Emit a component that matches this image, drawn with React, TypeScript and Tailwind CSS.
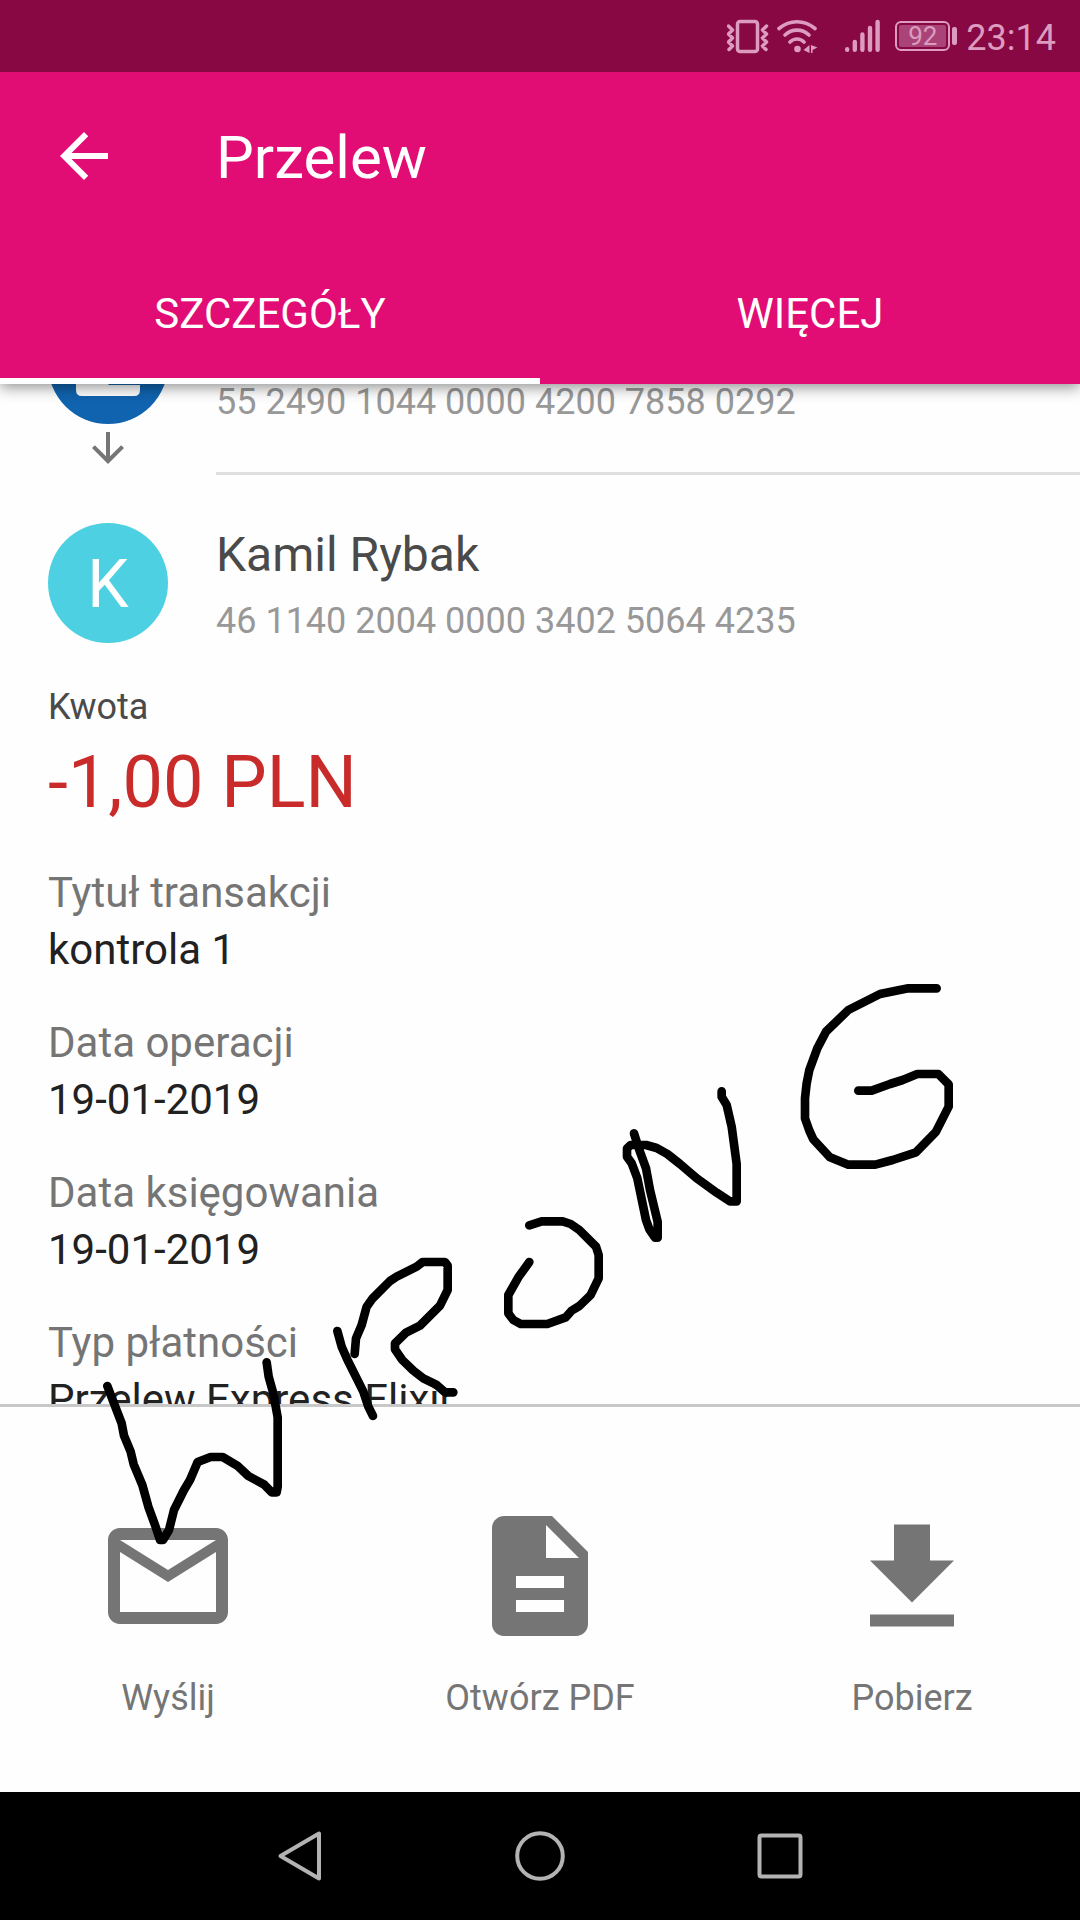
import React from "react";

const details = [
  { label: "Tytuł transakcji", value: "kontrola 1" },
  { label: "Data operacji", value: "19-01-2019" },
  { label: "Data księgowania", value: "19-01-2019" },
  { label: "Typ płatności", value: "Przelew Express Elixir" },
];

const actions = [
  {
    label: "Wyślij",
    path: "M20 4H4c-1.1 0-2 .9-2 2v12c0 1.1.9 2 2 2h16c1.1 0 2-.9 2-2V6c0-1.1-.9-2-2-2zm0 14H4V8l8 5 8-5v10zm-8-7L4 6h16l-8 5z",
  },
  {
    label: "Otwórz PDF",
    path: "M14 2H6c-1.1 0-2 .9-2 2v16c0 1.1.9 2 2 2h12c1.1 0 2-.9 2-2V8l-6-6zm2 16H8v-2h8v2zm0-4H8v-2h8v2zm-3-5V3.5L18.5 9H13z",
  },
  {
    label: "Pobierz",
    path: "M19 9.4h-4v-6H9v6H5l7 7 7-7zM5 18.4v2h14v-2H5z",
  },
];

function StatusBar() {
  return (
    <div className="z-10 flex h-[72px] shrink-0 items-center justify-end bg-[#870842] pr-6 text-[#dc9bbf]">
      <svg className="h-9 w-[42px]" viewBox="0 0 42 36" fill="none" stroke="currentColor" aria-hidden="true">
        <rect x="10.500" y="3.500" width="20" height="30" rx="2.500" strokeWidth="3.500" />
        <path d="M1.500 8l4 4-4 4 4 4-4 4 4 4-3.500 3.500M39.500 8l-4 4 4 4-4 4 4 4-4 4 3.500 3.500" strokeWidth="3.500" strokeLinejoin="round" strokeLinecap="round" />
      </svg>
      <svg className="ml-2 h-9 w-[42px]" viewBox="0 0 42 36" fill="none" stroke="currentColor" strokeWidth="3.600" strokeLinecap="round" aria-hidden="true">
        <path d="M2 10.500C13 1.500 27 1.500 38 10.500M8 17c7-6.500 17-6.500 24 0M13 24c4-4 10-4 14 0" />
        <circle cx="20.500" cy="31" r="3.300" fill="currentColor" stroke="none" />
        <path d="M32.500 27v8l-6-3zM34 27v8h1.500v-3l5-2.500z" fill="currentColor" stroke="none" />
      </svg>
      <svg className="ml-[26px] h-9 w-9" viewBox="0 0 36 36" fill="none" stroke="currentColor" strokeWidth="4.400" strokeLinecap="round" aria-hidden="true">
        <path d="M2.200 31.300v.500M9.800 24v7.800M17.400 16.500v15.300M25 10v21.800M32.600 4v27.800" />
      </svg>
      <div className="ml-[14px] flex items-center gap-[2px]">
        <div className="flex h-[30px] w-[55px] items-center justify-center rounded-md border-2 border-current p-[2px]">
          <span className="flex h-full w-full items-center justify-center rounded-xs bg-[#a94378] text-[26px] leading-none">92</span>
        </div>
        <span className="h-[18px] w-[5px] rounded-xs bg-current" />
      </div>
      <span className="ml-[9px] pt-[3px] text-4xl">23:14</span>
    </div>
  );
}

function Header() {
  return (
    <header className="shrink-0 bg-[#e20d74] text-white shadow-[0_3px_14px_rgba(0,0,0,0.45)]">
      <div className="flex h-[168px] items-center gap-24 px-12">
        <button type="button" aria-label="Wstecz">
          <svg className="size-[72px]" viewBox="0 0 24 24" fill="currentColor">
            <path d="M20 11H7.830l5.590-5.590L12 4l-8 8 8 8 1.410-1.410L7.830 13H20v-2z" />
          </svg>
        </button>
        <h1 className="pt-1 text-6xl">Przelew</h1>
      </div>
      <div className="grid h-36 grid-cols-2 text-[42px]" role="tablist">
        <button type="button" role="tab" aria-selected="true" className="border-b-6 border-white pt-2">
          SZCZEGÓŁY
        </button>
        <button type="button" role="tab" aria-selected="false" className="border-b-6 border-transparent pt-2">
          WIĘCEJ
        </button>
      </div>
    </header>
  );
}

function Parties() {
  return (
    <>
      <div className="-mt-20 flex">
        <div className="flex w-[216px] shrink-0 flex-col pb-[3px] pl-12">
          <svg className="size-[120px]" viewBox="0 0 120 120" aria-hidden="true">
            <circle cx="60" cy="60" r="60" fill="#1063ae" />
            <path d="M28 40h64v46q0 6-6 6H34q-6 0-6-6z" fill="#fff" />
            <path d="M57 77h35v4H61z" fill="#1063ae" />
          </svg>
          <svg className="ml-9 size-12 text-[#757575]" viewBox="0 0 24 24" fill="currentColor" aria-hidden="true">
            <path d="M20 12l-1.410-1.410L13 16.170V4h-2v12.170l-5.580-5.590L4 12l8 8 8-8z" />
          </svg>
        </div>
        <div className="flex-1 border-b-3 border-[#dfdfdf] pt-20 text-4xl leading-[36px] text-[#989898]">
          55 2490 1044 0000 4200 7858 0292
        </div>
      </div>
      <div className="mt-12 flex gap-12 pl-12">
        <div className="flex size-[120px] shrink-0 items-center justify-center rounded-full bg-[#4dd0e1] pt-1 text-[66px] leading-none text-white">
          K
        </div>
        <div className="pt-1">
          <h2 className="text-5xl leading-[56px] text-[#4a4a4a]">Kamil Rybak</h2>
          <p className="mt-4 text-4xl leading-[44px] text-[#989898]">46 1140 2004 0000 3402 5064 4235</p>
        </div>
      </div>
    </>
  );
}

function Annotation() {
  return (
    <svg
      className="pointer-events-none absolute inset-0 z-20 h-full w-full"
      viewBox="0 0 1080 1920"
      fill="none"
      stroke="#000"
      strokeWidth="26"
      strokeLinecap="round"
      strokeLinejoin="round"
      role="img"
      aria-label="WRONG"
    >
      <g transform="translate(0 1130) scale(.33333)">
        <path d="M322 768L365 880L372 917L392 965L401 1003L427 1065L445 1130L465 1185L480 1230H489L507 1200L522 1140L552 1080L570 1050L593 996L632 981H668L712 1007L745 1038L793 1064L815 1087H830L833 1070V862L820 790L806 740L800 697" />
        <path d="M1012 603L1025 650L1045 695L1090 785L1105 830L1119 858" />
        <path d="M1064 672L1068 625L1085 585L1100 530L1118 505L1170 453L1190 440L1250 410L1268 396H1335L1343 407V480L1320 527L1260 587L1218 608L1185 640V658L1207 690L1240 722L1270 745L1310 765L1335 787H1360" />
      </g>
      <g transform="translate(300 1180) scale(.33333)">
        <path d="M688 136L725 124H788L812 132L838 150L888 200L896 225V295L872 345L838 378L815 392L797 412L742 432H662L640 420L625 400V345L655 292L688 246" />
      </g>
      <g transform="translate(580 960) scale(.33333)">
        <path d="M162 520L178 570L198 625L210 690L233 785V833H225L208 808L198 780L172 655L155 610L141 590V565L152 555H198L230 564L262 582L300 612L350 655L410 698L450 724H470V612L455 500L440 435L425 410V394" />
        <path d="M835 392H875L930 372L968 360L1012 342H1075L1106 373V440L1068 515L1008 577L938 600L886 614H805L750 592L700 538L688 512L675 475V415L680 370L688 330L712 265L738 215L805 150L900 102L985 85H1070" />
      </g>
    </svg>
  );
}

function NavBar() {
  return (
    <nav className="flex h-32 shrink-0 justify-center bg-black text-[#b3b3b3]">
      <button type="button" aria-label="Wróć" className="flex w-60 items-center justify-center">
        <svg className="size-[52px]" viewBox="0 0 52 52" fill="none" stroke="currentColor" strokeWidth="4" strokeLinejoin="round">
          <path d="M45 3.500v45L6.500 26z" />
        </svg>
      </button>
      <button type="button" aria-label="Ekran główny" className="flex w-60 items-center justify-center">
        <svg className="size-[52px]" viewBox="0 0 52 52" fill="none" stroke="currentColor" strokeWidth="4">
          <circle cx="26" cy="26" r="22.800" />
        </svg>
      </button>
      <button type="button" aria-label="Ostatnie" className="flex w-60 items-center justify-center">
        <svg className="size-[52px]" viewBox="0 0 52 52" fill="none" stroke="currentColor" strokeWidth="4">
          <rect x="5.500" y="5.500" width="41" height="41" rx="2" />
        </svg>
      </button>
    </nav>
  );
}

export default function App() {
  return (
    <div className="relative flex h-screen flex-col overflow-hidden bg-[#fefefe] font-['Roboto',sans-serif]">
      <StatusBar />
      <div className="z-[5] shrink-0">
        <Header />
      </div>
      <main className="min-h-0 flex-1 overflow-hidden">
        <Parties />
        <div className="px-12">
          <p className="mt-[42px] text-4xl leading-[44px] text-[#4a4a4a]">Kwota</p>
          <p className="mt-3 text-7xl leading-[84px] text-[#c92a2a]">-1,00 PLN</p>
          <dl className="mt-[43px] flex flex-col gap-[43px] text-[42px] leading-[50px]">
            {details.map((d) => (
              <div key={d.label} className="flex flex-col gap-[7px]">
                <dt className="text-[#757575]">{d.label}</dt>
                <dd className="text-[#212121]">{d.value}</dd>
              </div>
            ))}
          </dl>
        </div>
      </main>
      <footer className="flex shrink-0 justify-between border-t-3 border-[#c8c8c8] px-24 pt-[97px] pb-[70px] text-[#757575]">
        {actions.map((a) => (
          <button key={a.label} type="button" className="flex w-36 flex-col items-center gap-[26px] text-4xl leading-[48px] whitespace-nowrap">
            <svg className="size-36" viewBox="0 0 24 24" fill="currentColor" aria-hidden="true">
              <path d={a.path} />
            </svg>
            {a.label}
          </button>
        ))}
      </footer>
      <NavBar />
      <Annotation />
    </div>
  );
}
